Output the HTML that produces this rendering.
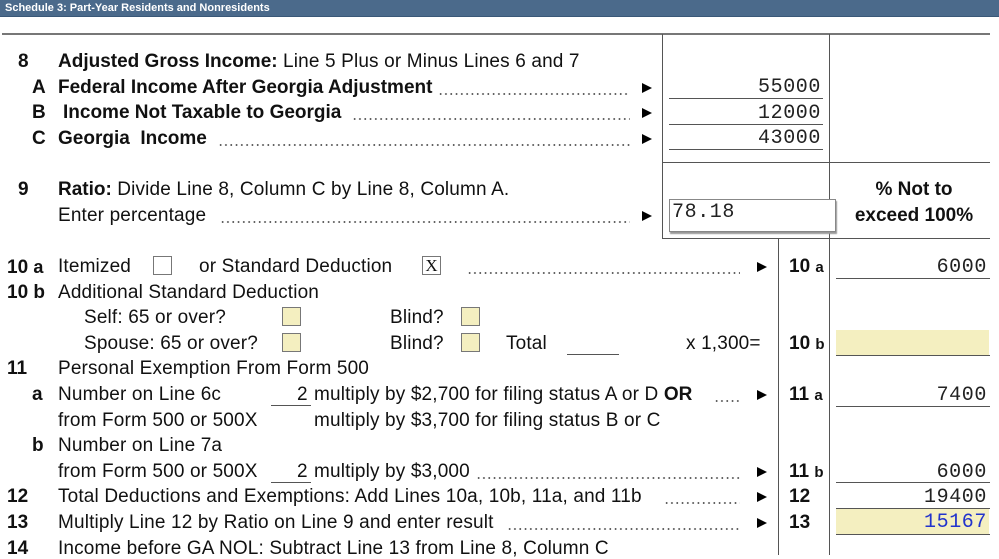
<!DOCTYPE html>
<html><head><meta charset="utf-8"><style>
*{margin:0;padding:0;box-sizing:border-box}
body{width:999px;height:555px;overflow:hidden;background:#fff;position:relative;font-family:"Liberation Sans",Arial,sans-serif;color:#111}
.t{position:absolute;white-space:nowrap;font-size:19px;line-height:20px;letter-spacing:0.15px}
.t b,.b{letter-spacing:0}
.b{font-weight:bold}
.n{position:absolute;white-space:nowrap;font-family:"Liberation Mono",monospace;font-size:20px;line-height:20px;text-align:right;letter-spacing:0.6px;color:#222}
.hl{position:absolute;height:1px;background:#555}
.vl{position:absolute;width:1px;background:#555}
.d{position:absolute;height:4px;background-image:radial-gradient(circle,#555 0.8px,transparent 1.1px);background-size:5.3px 4px;background-repeat:repeat-x}
.ar{position:absolute;width:0;height:0;border-top:5px solid transparent;border-bottom:5px solid transparent;border-left:10px solid #000}
.cb{position:absolute;width:19px;height:19px;border:1px solid #777;background:#fff}
.y{background:#f4efc0}
.ln{position:absolute;font-weight:bold;font-size:19px;line-height:20px}
</style></head><body>
<div style="position:absolute;left:0;top:0;width:999px;height:17px;background:#4b6a8b;border-bottom:1px solid #3a5878"></div>
<div style="position:absolute;left:5px;top:2px;color:#fff;font-size:11px;font-weight:bold;line-height:13px">Schedule 3: Part-Year Residents and Nonresidents</div>

<div class="hl" style="left:2px;top:33px;width:988px;height:2px;background:#777"></div>
<div class="vl" style="left:662px;top:34px;height:204px"></div>
<div class="vl" style="left:829px;top:34px;height:521px"></div>
<div class="vl" style="left:778px;top:238px;height:317px"></div>
<div class="hl" style="left:662px;top:162px;width:328px"></div>
<div class="hl" style="left:662px;top:238px;width:328px"></div>

<div class="t b" style="left:18px;top:52px">8</div>
<div class="t" style="left:58px;top:52px"><b>Adjusted Gross Income:</b> Line 5 Plus or Minus Lines 6 and 7</div>
<div class="t b" style="left:32px;top:78px">A</div>
<div class="t b" style="left:58px;top:78px">Federal Income After Georgia Adjustment</div>
<div class="d" style="left:438px;top:92px;width:192px"></div>
<div class="t b" style="left:32px;top:103px">B</div>
<div class="t b" style="left:63px;top:103px">Income Not Taxable to Georgia</div>
<div class="d" style="left:352px;top:117px;width:278px"></div>
<div class="t b" style="left:32px;top:129px">C</div>
<div class="t b" style="left:58px;top:129px">Georgia&nbsp; Income</div>
<div class="d" style="left:218px;top:143px;width:412px"></div>
<div class="ar" style="left:642px;top:83px"></div>
<div class="ar" style="left:642px;top:108px"></div>
<div class="ar" style="left:642px;top:134px"></div>
<div class="n" style="left:669px;top:78px;width:152px">55000</div>
<div class="hl" style="left:669px;top:98px;width:154px"></div>
<div class="n" style="left:669px;top:104px;width:152px">12000</div>
<div class="hl" style="left:669px;top:124px;width:154px"></div>
<div class="n" style="left:669px;top:129px;width:152px">43000</div>
<div class="hl" style="left:669px;top:149px;width:154px"></div>

<div class="t b" style="left:18px;top:180px">9</div>
<div class="t" style="left:58px;top:180px"><b>Ratio:</b> Divide Line 8, Column C by Line 8, Column A.</div>
<div class="t" style="left:58px;top:206px">Enter percentage</div>
<div class="d" style="left:220px;top:220px;width:410px"></div>
<div class="ar" style="left:642px;top:211px"></div>
<div style="position:absolute;left:669px;top:199px;width:167px;height:33px;border:1px solid #888;box-shadow:1px 2px 1px #999;background:#fff"></div>
<div class="n" style="left:672px;top:203px;text-align:left">78.18</div>
<div class="t b" style="left:829px;top:180px;width:170px;text-align:center">% Not to</div>
<div class="t b" style="left:829px;top:206px;width:170px;text-align:center">exceed 100%</div>

<div class="ln" style="left:7px;top:257px">10 <span style="font-size:18px">a</span></div>
<div class="t" style="left:58px;top:257px">Itemized</div>
<div class="cb" style="left:153px;top:256px"></div>
<div class="t" style="left:199px;top:257px">or Standard Deduction</div>
<div class="cb" style="left:422px;top:256px;text-align:center;font-family:'Liberation Serif',serif;font-size:17px;line-height:17px">X</div>
<div class="d" style="left:467px;top:271px;width:273px"></div>
<div class="ar" style="left:757px;top:262px"></div>
<div class="ln" style="left:789px;top:257px">10 <span style="font-size:15px">a</span></div>
<div class="n" style="left:836px;top:258px;width:151px">6000</div>
<div class="hl" style="left:836px;top:278px;width:154px"></div>

<div class="ln" style="left:7px;top:283px">10 b</div>
<div class="t" style="left:58px;top:283px">Additional Standard Deduction</div>
<div class="t" style="left:84px;top:308px">Self: 65 or over?</div>
<div class="cb y" style="left:282px;top:307px"></div>
<div class="t" style="left:390px;top:308px">Blind?</div>
<div class="cb y" style="left:461px;top:307px"></div>
<div class="t" style="left:84px;top:334px">Spouse: 65 or over?</div>
<div class="cb y" style="left:282px;top:333px"></div>
<div class="t" style="left:390px;top:334px">Blind?</div>
<div class="cb y" style="left:461px;top:333px"></div>
<div class="t" style="left:506px;top:334px">Total</div>
<div class="hl" style="left:567px;top:354px;width:52px"></div>
<div class="t" style="left:686px;top:334px">x 1,300=</div>
<div class="ln" style="left:789px;top:334px">10 <span style="font-size:15px">b</span></div>
<div style="position:absolute;left:836px;top:330px;width:153px;height:25px;background:#f4efc0"></div>
<div class="hl" style="left:836px;top:355px;width:154px"></div>

<div class="ln" style="left:7px;top:359px">11</div>
<div class="t" style="left:58px;top:359px">Personal Exemption From Form 500</div>
<div class="ln" style="left:32px;top:385px">a</div>
<div class="t" style="left:58px;top:385px">Number on Line 6c</div>
<div class="t" style="left:297px;top:385px">2</div>
<div class="hl" style="left:271px;top:405px;width:40px"></div>
<div class="t" style="left:314px;top:385px">multiply by $2,700 for filing status A or D <b>OR</b></div>
<div class="d" style="left:714px;top:399px;width:26px"></div>
<div class="ar" style="left:757px;top:390px"></div>
<div class="ln" style="left:789px;top:385px">11 <span style="font-size:15px">a</span></div>
<div class="n" style="left:836px;top:386px;width:151px">7400</div>
<div class="hl" style="left:836px;top:406px;width:154px"></div>
<div class="t" style="left:58px;top:411px">from Form 500 or 500X</div>
<div class="t" style="left:314px;top:411px">multiply by $3,700 for filing status B or C</div>
<div class="ln" style="left:32px;top:436px">b</div>
<div class="t" style="left:58px;top:436px">Number on Line 7a</div>
<div class="t" style="left:58px;top:462px">from Form 500 or 500X</div>
<div class="t" style="left:297px;top:462px">2</div>
<div class="hl" style="left:271px;top:482px;width:40px"></div>
<div class="t" style="left:314px;top:462px">multiply by $3,000</div>
<div class="d" style="left:476px;top:476px;width:264px"></div>
<div class="ar" style="left:757px;top:467px"></div>
<div class="ln" style="left:789px;top:462px">11 <span style="font-size:15px">b</span></div>
<div class="n" style="left:836px;top:463px;width:151px">6000</div>
<div class="hl" style="left:836px;top:482px;width:154px"></div>

<div class="ln" style="left:7px;top:487px">12</div>
<div class="t" style="left:58px;top:487px">Total Deductions and Exemptions: Add Lines 10a, 10b, 11a, and 11b</div>
<div class="d" style="left:664px;top:501px;width:76px"></div>
<div class="ar" style="left:757px;top:492px"></div>
<div class="ln" style="left:789px;top:487px">12</div>
<div class="n" style="left:836px;top:488px;width:151px">19400</div>
<div class="hl" style="left:836px;top:508px;width:154px"></div>

<div class="ln" style="left:7px;top:513px">13</div>
<div class="t" style="left:58px;top:513px">Multiply Line 12 by Ratio on Line 9 and enter result</div>
<div class="d" style="left:507px;top:527px;width:233px"></div>
<div class="ar" style="left:757px;top:518px"></div>
<div class="ln" style="left:789px;top:513px">13</div>
<div style="position:absolute;left:836px;top:509px;width:153px;height:25px;background:#f4efc0"></div>
<div class="n" style="left:836px;top:513px;width:151px;color:#2233cc">15167</div>
<div class="hl" style="left:836px;top:534px;width:154px"></div>

<div class="ln" style="left:7px;top:539px">14</div>
<div class="t" style="left:58px;top:539px">Income before GA NOL: Subtract Line 13 from Line 8, Column C</div>
</body></html>
